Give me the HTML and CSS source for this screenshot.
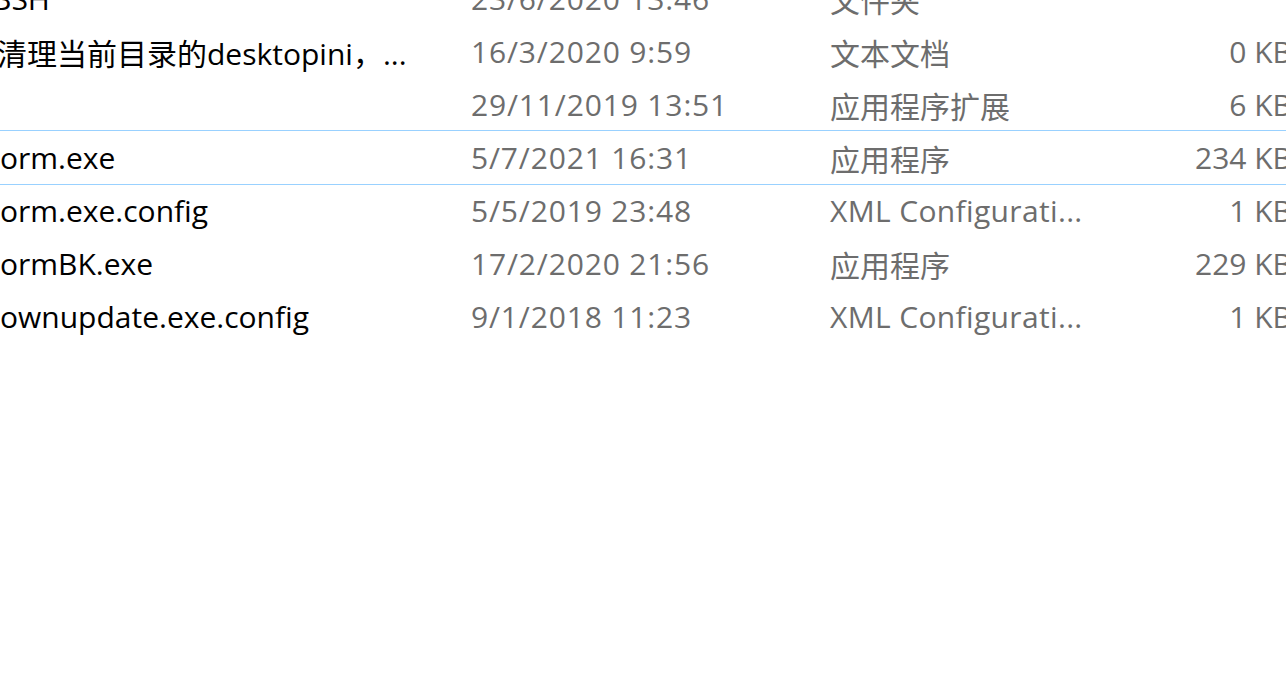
FILE: index.html
```html
<!DOCTYPE html>
<html lang="zh-CN">
<head>
<meta charset="utf-8">
<title>文件列表</title>
<link rel="stylesheet" href="styles.css">
</head>
<body>
<div class="list">
  <div class="row">
    <span class="name clip-b">BSH</span>
    <span class="date">23/6/2020 13:46</span>
    <span class="type">文件夹</span>
    <span class="size"></span>
  </div>
  <div class="row">
    <span class="name clip-q">清理当前目录的desktopini，...</span>
    <span class="date">16/3/2020 9:59</span>
    <span class="type">文本文档</span>
    <span class="size">0 KB</span>
  </div>
  <div class="row">
    <span class="name"></span>
    <span class="date">29/11/2019 13:51</span>
    <span class="type">应用程序扩展</span>
    <span class="size">6 KB</span>
  </div>
  <div class="row selected">
    <span class="name">orm.exe</span>
    <span class="date">5/7/2021 16:31</span>
    <span class="type">应用程序</span>
    <span class="size">234 KB</span>
  </div>
  <div class="row">
    <span class="name">orm.exe.config</span>
    <span class="date">5/5/2019 23:48</span>
    <span class="type latin">XML Configurati...</span>
    <span class="size">1 KB</span>
  </div>
  <div class="row">
    <span class="name">ormBK.exe</span>
    <span class="date">17/2/2020 21:56</span>
    <span class="type">应用程序</span>
    <span class="size">229 KB</span>
  </div>
  <div class="row">
    <span class="name">ownupdate.exe.config</span>
    <span class="date">9/1/2018 11:23</span>
    <span class="type latin">XML Configurati...</span>
    <span class="size">1 KB</span>
  </div>
</div>
</body>
</html>
```
FILE: styles.css
```css
html, body {
  margin: 0;
  padding: 0;
  background: #ffffff;
  overflow: hidden;
  width: 1286px;
  height: 678px;
}

.list {
  margin-top: -28px;
  font-family: "Open Sans", "Noto Sans CJK SC", sans-serif;
  font-size: 30px;
}

.row {
  display: grid;
  grid-template-columns: 471px 359px 300px 162px;
  align-items: center;
  height: 53px;
  width: 1320px;
  margin-left: -10px;
  padding-left: 10px;
  box-sizing: border-box;
  white-space: nowrap;
}

.row.selected {
  outline: 1px solid #99d1ff;
}

.name {
  color: #000000;
  overflow: hidden;
}

.clip-b {
  margin-left: -8px;
}

.clip-q {
  margin-left: -3px;
}

.date,
.type,
.size {
  color: #6d6d6d;
}

.date {
  letter-spacing: 0.85px;
}

.type.latin {
  letter-spacing: 0.35px;
}

.size {
  text-align: right;
}
```
